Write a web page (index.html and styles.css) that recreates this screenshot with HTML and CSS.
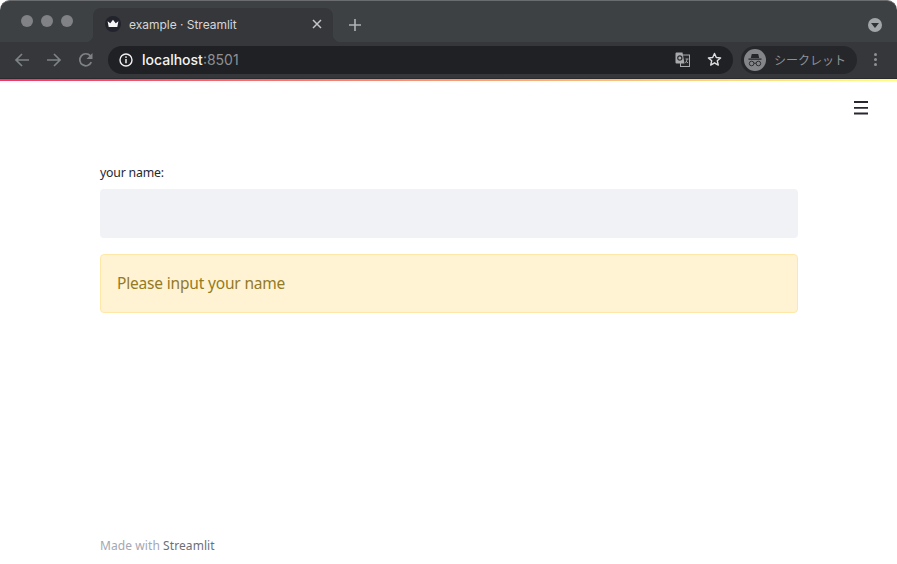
FILE: index.html
```html
<!DOCTYPE html>
<html lang="en">
<head>
<meta charset="utf-8">
<title>example · Streamlit</title>
<link rel="stylesheet" href="styles.css">
</head>
<body>
<div class="browser">
  <div class="tabstrip">
    <div class="lights"><span class="light"></span><span class="light"></span><span class="light"></span></div>
    <div class="tab">
      <span class="favicon">
        <svg width="16" height="16" viewBox="0 0 16 16"><circle cx="8" cy="8" r="8" fill="#22232c"/><path d="M2.600 5.200L5.300 7.200 8 3.800l2.700 3.400 2.700-2L12.300 11H3.700z" fill="#f6f6f6"/></svg>
      </span>
      <span class="tab-title">example · Streamlit</span>
      <svg class="tab-close" width="10" height="10" viewBox="0 0 10 10"><path d="M1 1l8 8M9 1l-8 8" stroke="#c4c6c8" stroke-width="1.500"/></svg>
    </div>
    <svg class="newtab" width="14" height="14" viewBox="0 0 14 14"><path d="M7 1v12M1 7h12" stroke="#b0b3b5" stroke-width="1.600"/></svg>
    <span class="strip-space"></span>
    <span class="tabmenu"><svg width="14" height="14" viewBox="0 0 14 14"><circle cx="7" cy="7" r="7" fill="#a3a6a9"/><path d="M3 5h8l-4 5z" fill="#2f3134"/></svg></span>
  </div>
  <div class="toolbar">
    <svg class="nav" width="16" height="16" viewBox="0 0 16 16"><path d="M15 8H2M8 2L2 8l6 6" fill="none" stroke="#7f8285" stroke-width="1.700"/></svg>
    <svg class="nav" width="16" height="16" viewBox="0 0 16 16"><path d="M1 8h13M8 2l6 6-6 6" fill="none" stroke="#7f8285" stroke-width="1.700"/></svg>
    <svg class="nav" width="16" height="16" viewBox="0 0 16 16"><path d="M13.300 10.200A6 6 0 1 1 12.400 3.900" fill="none" stroke="#7f8285" stroke-width="1.700"/><path d="M14.500 1v6h-6z" fill="#7f8285"/></svg>
    <div class="omnibox">
      <svg class="info" width="14" height="14" viewBox="0 0 14 14"><circle cx="7" cy="7" r="6" fill="none" stroke="#f2f2f2" stroke-width="1.400"/><path d="M7 6v4.200" stroke="#f2f2f2" stroke-width="1.500"/><circle cx="7" cy="4.100" r=".9" fill="#f2f2f2"/></svg>
      <span class="url"><b class="host">localhost</b>:8501</span>
      <span class="strip-space"></span>
      <svg class="translate" width="15" height="15" viewBox="0 0 15 15"><rect x="5.500" y="3" width="9" height="11.500" fill="#26282b" stroke="#a8aaac" stroke-width="1"/><path d="M1.500 .5h6l2 11h-8a1 1 0 0 1-1-1v-9a1 1 0 0 1 1-1z" fill="#a8aaac"/><circle cx="4.800" cy="6" r="2.100" fill="none" stroke="#2a2c2f" stroke-width="1.200"/><path d="M10.500 7h3M12 7v1l-1.500 3M11 9l2 2" stroke="#a8aaac" stroke-width=".9" fill="none"/></svg>
      <svg class="star" width="15" height="15" viewBox="0 0 15 15"><path d="M7.500 1.500l1.800 4 4.300.4-3.300 2.900 1 4.300-3.800-2.300-3.800 2.300 1-4.300L1.400 5.900l4.300-.4z" fill="none" stroke="#dedede" stroke-width="1.400" stroke-linejoin="round"/></svg>
    </div>
    <div class="incognito">
      <span class="avatar">
        <svg width="22" height="22" viewBox="0 0 22 22"><circle cx="11" cy="11" r="11" fill="#838588"/><path d="M7.800 5h6.400l1 4H6.800zM4.500 9.500h13v1.200h-13z" fill="#26272b"/><circle cx="7.600" cy="14.500" r="2.300" fill="none" stroke="#26272b" stroke-width=".9"/><circle cx="14.400" cy="14.500" r="2.300" fill="none" stroke="#26272b" stroke-width=".9"/><path d="M9.900 14.200h2.200" stroke="#26272b" stroke-width=".9"/></svg>
      </span>
      <span class="incognito-label">シークレット</span>
    </div>
    <span class="kebab"><i class="dot"></i><i class="dot"></i><i class="dot"></i></span>
  </div>
</div>
<div class="rainbow"></div>
<main class="app">
  <div class="appbar">
    <svg class="burger" width="14" height="15" viewBox="0 0 14 15"><path d="M0 2h14M0 7.800h14M0 13.500h14" stroke="#262730" stroke-width="1.800"/></svg>
  </div>
  <section class="content">
    <label class="field-label" for="name">your name:</label>
    <input class="field" id="name" type="text">
    <div class="alert">Please input your name</div>
  </section>
  <footer class="footer">Made with <span class="footer-link">Streamlit</span></footer>
</main>
</body>
</html>
```
FILE: styles.css
```css
* { box-sizing: border-box; }
html, body { margin: 0; height: 100%; }
body {
  background: #fff;
  font-family: "Noto Sans", "Liberation Sans", sans-serif;
  display: flex;
  flex-direction: column;
  height: 564px;
  overflow: hidden;
}
.browser { background: #fff; flex: none; }
.tabstrip {
  height: 42px;
  display: flex;
  align-items: flex-end;
  border-top: 1px solid #6a6c6e;
  border-radius: 10px 10px 0 0;
  background: #3e4144;
}
.lights { display: flex; gap: 8px; padding: 0 0 0 21px; width: 93px; align-self: flex-start; margin-top: 14px; }
.light { width: 12px; height: 12px; border-radius: 50%; background: #808285; }
.tab {
  position: relative;
  width: 240px;
  height: 34px;
  background: #35373a;
  border-radius: 8px 8px 0 0;
  display: flex;
  align-items: center;
  padding: 0 11px 2px 12px;
}
.tab::before,
.tab::after {
  content: "";
  position: absolute;
  bottom: 0;
  width: 8px;
  height: 8px;
}
.tab::before { left: -8px; background: radial-gradient(circle at 0 0, transparent 8px, #35373a 8.500px); }
.tab::after { right: -8px; background: radial-gradient(circle at 100% 0, transparent 8px, #35373a 8.500px); }
.favicon { width: 16px; height: 16px; display: flex; }
.tab-title { margin-left: 8px; font-size: 12px; letter-spacing: -.02px; color: #d5d6d7; flex: 1; white-space: nowrap; font-family: "Inter", sans-serif; }
.tab-close { flex: none; }
.newtab { margin: 0 0 10px 15px; }
.strip-space { flex: 1; }
.tabmenu { display: flex; margin: 0 15px 10px 0; }
.toolbar {
  height: 37px;
  display: flex;
  align-items: center;
  padding: 0 14px 1px 14px;
  background: #35373a;
  border-bottom: 1px solid #2a2b2e;
}
.nav { margin-right: 16px; flex: none; }
.omnibox {
  width: 625px;
  height: 28px;
  margin-left: -2px;
  border-radius: 14px;
  background: #1f2124;
  display: flex;
  align-items: center;
  padding: 0 11px;
}
.url { margin-left: 9px; font-size: 14px; font-family: "Inter", sans-serif; color: #8e9093; }
.host { font-weight: 500; color: #f4f4f4; }
.translate { margin-right: 17px; }
.incognito {
  margin-left: 8px;
  width: 116px;
  height: 28px;
  border-radius: 14px;
  background: #26272b;
  display: flex;
  align-items: center;
  padding-left: 3px;
}
.avatar { display: flex; width: 22px; height: 22px; }
.incognito-label { margin-left: 8px; font-size: 12px; color: #8f9194; font-family: "Noto Sans CJK JP", sans-serif; white-space: nowrap; }
.kebab { margin-left: 17px; display: flex; flex-direction: column; gap: 2px; }
.dot { width: 3px; height: 3px; border-radius: 50%; background: #8e9093; }
.rainbow { height: 2px; flex: none; background: linear-gradient(90deg, #f63366, #fffd80); }
.app { flex: 1; display: flex; flex-direction: column; min-height: 0; }
.appbar { display: flex; justify-content: flex-end; padding: 19px 29px 0 0; }
.burger { display: block; }
.content { flex: 1; padding: 50px 99px 0 100px; display: flex; flex-direction: column; }
.field-label { font-size: 12.300px; letter-spacing: -.2px; color: #262730; line-height: 16px; margin-bottom: 8px; }
.field { height: 49px; border: 0; border-radius: 4px; background: #f0f2f6; }
.alert {
  margin-top: 16px;
  height: 59px;
  padding: 0 16px 2px;
  display: flex;
  align-items: center;
  background: #fff3d4;
  border: 1px solid #ffe7a8;
  border-radius: 4px;
  color: #937a24;
  font-size: 15.500px;
  letter-spacing: -.18px;
}
.footer { padding: 0 100px 10px; font-size: 12px; letter-spacing: .08px; line-height: 16px; color: #a3a8b4; }
.footer-link { color: #6c6f78; }
```
